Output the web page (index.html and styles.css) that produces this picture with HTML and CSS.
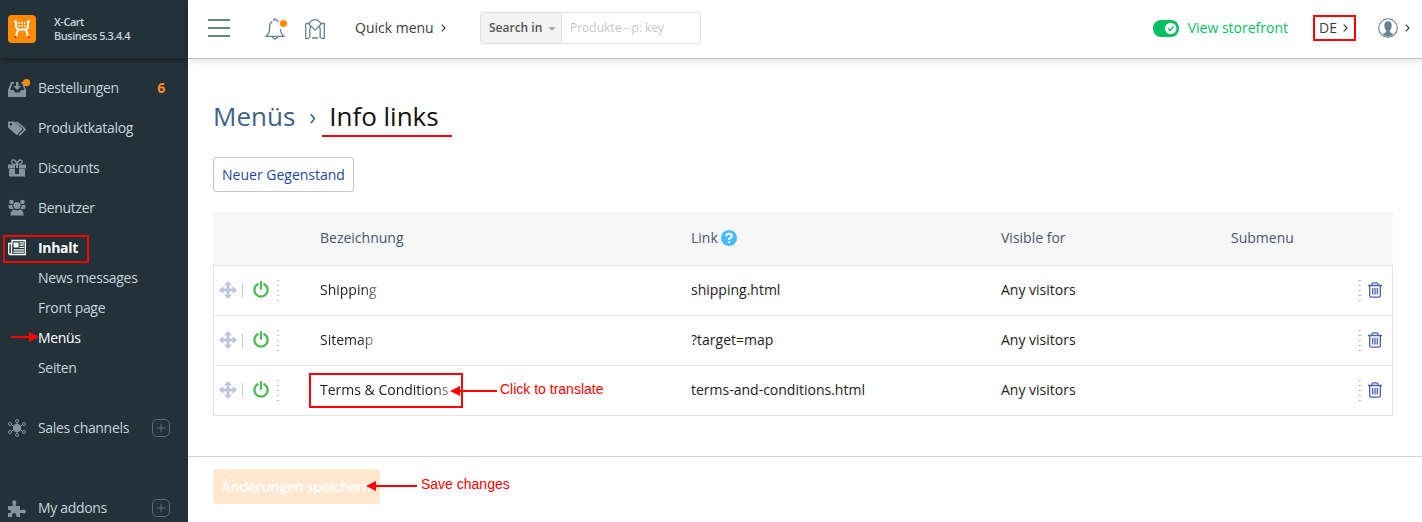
FILE: index.html
```html
<!DOCTYPE html>
<html lang="de">
<head>
<meta charset="utf-8">
<title>Info links</title>
<link rel="stylesheet" href="styles.css">
</head>
<body>
<svg class="defs" width="0" height="0">
  <symbol id="move" viewBox="0 0 18 18"><path d="M9 0l4 4.300h-2.600v3.300h3.300V5L18 9l-4.300 4v-2.600h-3.300v3.300H13L9 18l-4-4.300h2.600v-3.300H4.300V13L0 9l4.300-4v2.600h3.300V4.300H5z"/></symbol>
  <symbol id="power" viewBox="0 0 16 17"><path d="M4.600 3.300A6.600 6.600 0 1 0 11.400 3.300M8 1.200v6.600" fill="none" stroke="currentColor" stroke-width="2.300" stroke-linecap="round"/></symbol>
  <symbol id="trash" viewBox="0 0 14 16"><path d="M0 3.500h14M4 3.300V2q0-1.200 1.200-1.200h3.600Q10 .8 10 2v1.300M1.700 3.800v10q0 1.400 1.400 1.400h7.800q1.400 0 1.400-1.400v-10M4.700 6v6.500M7 6v6.500M9.300 6v6.500" fill="none" stroke="currentColor" stroke-width="1.300"/></symbol>
  <symbol id="chev" viewBox="0 0 5 8"><path d="M.7.7L4 4 .7 7.300" fill="none" stroke="currentColor" stroke-width="1.200"/></symbol>
  <symbol id="plus" viewBox="0 0 18 18"><rect x=".5" y=".5" width="17" height="17" rx="4.500" fill="none" stroke="currentColor"/><path d="M9 4.500v9M4.500 9h9" stroke="currentColor"/></symbol>
  <symbol id="dots" viewBox="0 0 2 22"><path d="M0 1.500h1.700M0 6.500h1.700M0 11.500h1.700M0 16.500h1.700M0 21.500h1.700" stroke="currentColor" stroke-width="1"/></symbol>
</svg>
<div class="app">
  <aside class="sidebar">
    <div class="brand">
      <svg class="logo" viewBox="0 0 28 28"><rect width="28" height="28" rx="4" fill="#ff8c00"/><path d="M6 6.500h2v4.500q0 3.500 3.500 3.500h5q3.500 0 3.500-3.500V6.500h2M11 15q-2.500 1-2.500 6M17 15q2.500 1 2.500 6M9.500 20.500H7.300M18.500 20.500h2.200" fill="none" stroke="#fff" stroke-width="1.900"/><path d="M10 7.800h8M10 10.800h8" stroke="#fff" stroke-width="1.700" stroke-dasharray="1.700 1.400"/><circle cx="7.500" cy="22" r="1.100" fill="#b9310a"/><circle cx="20.500" cy="22" r="1.100" fill="#b9310a"/></svg>
      <div class="brand-text">X-Cart<br><span>Business 5.3.4.4</span></div>
    </div>
    <nav class="menu">
      <a class="item"><svg class="icon" viewBox="0 0 22 18"><path d="M0 11L3 3h3v1.800H4.300L2.300 11h3l2 2.500h4l2-2.500h3l-2-6.200h-1V3h2L18 11v7H0zM8 3h2.400v4H13l-3.800 4L5.500 7H8z" fill="currentColor"/><circle cx="18.500" cy="3.700" r="3.600" fill="#ff8c00"/></svg><span>Bestellungen</span><b class="count">6</b></a>
      <a class="item"><svg class="icon" viewBox="0 0 22 18"><path fill-rule="evenodd" d="M0 2.500h6.500l8 7.500-5.600 6.300L0 8.500zM2.800 4a1.300 1.300 0 1 0 .1 0z" fill="currentColor"/><path d="M8.500 2.800l8.600 7.500-6 6" fill="none" stroke="currentColor" stroke-width="1.700"/></svg><span>Produktkatalog</span></a>
      <a class="item"><svg class="icon" viewBox="0 0 22 18"><path d="M0 5.500h7v4H0zM11 5.500h7v4h-7zM1 10h6v7.500H1zM11 10h6v7.500h-6zM7 15h4v2.500H7zM8 6h2v3H8z" fill="currentColor"/><path d="M8.500 5.500Q4 5.800 3.800 3T6 1q2 .5 2.700 4.300Q10 1.500 12 1q2.500 0 2.200 2t-5 2.500" fill="none" stroke="currentColor" stroke-width="1.300"/></svg><span>Discounts</span></a>
      <a class="item"><svg class="icon" viewBox="0 0 22 18"><g fill="currentColor"><circle cx="3.500" cy="3" r="2.300"/><circle cx="14.500" cy="3" r="2.300"/><circle cx="9" cy="6.500" r="3.600"/><path d="M.5 6h3.700q.4 3 2 4.300H3.500Q0 10.200.5 6zM17.500 6h-3.700q-.4 3-2 4.300h2.700Q18 10.200 17.500 6zM2.500 16.500q-.5-5.500 4-5.800 2.500 1 5 0 4.500.3 4 5.800z"/></g></svg><span>Benutzer</span></a>
      <a class="item active"><svg class="icon" viewBox="0 0 22 18"><path d="M4 1.500h13.300v14H2Q.7 15.500.7 14V4.500H4zM3.500 4v10q0 1.200-1.200 1.500" fill="none" stroke="currentColor" stroke-width="1.300"/><path d="M5.500 3.500h5v5h-5zM11.500 3.300H16v1.200h-4.500zM11.500 5.600H16v1.200h-4.500zM11.500 7.900H16v1h-4.500zM5.500 10.200H16v1.200H5.500zM5.500 12.600H16v1.200H5.500z" fill="currentColor"/></svg><span>Inhalt</span><i class="mark mark-inhalt"></i></a>
      <div class="submenu">
        <a>News messages</a>
        <a>Front page</a>
        <a class="current">Menüs<svg class="mark-arrow" viewBox="0 0 30 10"><path d="M1 5h20" stroke="red" stroke-width="2"/><path d="M19 0l10.500 5L19 10z" fill="red"/></svg></a>
        <a>Seiten</a>
      </div>
      <a class="item gap-first"><svg class="icon" viewBox="0 0 22 18"><circle cx="9" cy="9" r="4.200" fill="currentColor"/><g fill="none" stroke="currentColor" stroke-width="1"><circle cx="9" cy="2" r="1.500"/><circle cx="9" cy="16" r="1.500"/><circle cx="2" cy="5" r="1.500"/><circle cx="2" cy="13" r="1.500"/><circle cx="16" cy="5" r="1.500"/><circle cx="16" cy="13" r="1.500"/><path d="M9 3.500v11M3.300 5.800l11.400 6.400M3.300 12.200L14.700 5.800"/></g></svg><span>Sales channels</span><svg class="plus"><use href="#plus"/></svg></a>
      <a class="item gap-second"><svg class="icon" viewBox="0 0 22 18"><path d="M0 7h4.700L4.600 4.500a2 2 0 1 1 3.300 0L7.800 7H12v4h2.500a2 2 0 1 1 0 3H12v4H8.500q-.2-4-2.300-4T4 18H0v-4h1.500a1.300 1.300 0 1 0 0-3H0z" fill="currentColor"/></svg><span>My addons</span><svg class="plus"><use href="#plus"/></svg></a>
    </nav>
  </aside>
  <div class="main">
    <header class="topbar">
      <svg class="burger" viewBox="0 0 22 18"><path d="M0 1h22M0 9h22M0 17h22" stroke="#668391" stroke-width="2"/></svg>
      <svg class="bell" viewBox="0 0 24 22"><path d="M7.300 3.500Q4.500 5 4.500 9v3.500Q4.400 15.500 1.200 18.300H18.800Q15.500 15.500 15.400 11M8.500 2.800Q8.800 1 10 1t1.500 1.600l2 1M7.500 18.500q.5 2.300 2.500 2.300t2.500-2.300" fill="none" stroke="#668391" stroke-width="1.300"/><circle cx="18.500" cy="5.500" r="3.600" fill="#ff8c00"/></svg>
      <svg class="market" viewBox="0 0 20 20"><path d="M4 5.200Q6 .7 10 .7t6 4.500L10 11.200zM.7 4.500h3.500M15.800 4.500h3.500v15h-3.500M.7 4.500v15h3.500M4.200 5.200Q6.500 7 4.800 10v9M15.800 5.200q-2.300 1.800-.6 4.800v9M7 19h6" fill="none" stroke="#668391" stroke-width="1.300"/></svg>
      <a class="quick"><span>Quick menu</span><svg class="chev"><use href="#chev"/></svg></a>
      <div class="search"><div class="search-in"><span>Search in</span><i></i></div><div class="placeholder">Produkte - p: key</div></div>
      <div class="storefront"><svg viewBox="0 0 26 17"><rect width="26" height="17" rx="8" fill="#06c063"/><circle cx="17.700" cy="8.500" r="5.700" fill="#fff"/><path d="M15 8.500l2 2 3.500-4" fill="none" stroke="#06c063" stroke-width="1.300"/></svg><span>View storefront</span></div>
      <div class="lang"><span>DE</span><svg class="chev"><use href="#chev"/></svg></div>
      <div class="user"><svg class="avatar" viewBox="0 0 20 20"><circle cx="10" cy="10" r="9.300" fill="#fff" stroke="#668391" stroke-width="1.100"/><path d="M10 3.200q3.800 0 3.700 4.300-.1 3.500-2 5 .1 1.700 1.300 2.200l2.500 1.200Q13 18.800 10 18.800t-5.500-2.900l2.500-1.200q1.200-.5 1.300-2.200-1.900-1.500-2-5Q6.200 3.200 10 3.200z" fill="#668391"/></svg><svg class="chev"><use href="#chev"/></svg></div>
    </header>
    <main class="content">
      <h1 class="title"><a>Menüs</a><span class="sep">›</span><span class="here">Info links</span></h1>
      <button class="new">Neuer Gegenstand</button>
      <div class="table">
        <div class="row head"><div></div><div>Bezeichnung</div><div class="link-head">Link <svg class="help" viewBox="0 0 16 16"><circle cx="8" cy="8" r="8" fill="#46bdfa"/><path d="M5.300 6Q5.400 3.700 8 3.700T10.700 6Q10.700 7.300 9.300 8 8 8.700 8 9.700M8 11v2" fill="none" stroke="#fff" stroke-width="2"/></svg></div><div>Visible for</div><div>Submenu</div><div></div></div>
        <div class="row"><div class="tools"><svg class="move"><use href="#move"/></svg><i></i><svg class="power"><use href="#power"/></svg><svg class="dots"><use href="#dots"/></svg></div><div><span class="fade">Shipping</span></div><div>shipping.html</div><div>Any visitors</div><div></div><div class="remove"><svg class="dots"><use href="#dots"/></svg><svg class="trash"><use href="#trash"/></svg></div></div>
        <div class="row"><div class="tools"><svg class="move"><use href="#move"/></svg><i></i><svg class="power"><use href="#power"/></svg><svg class="dots"><use href="#dots"/></svg></div><div><span class="fade">Sitemap</span></div><div>?target=map</div><div>Any visitors</div><div></div><div class="remove"><svg class="dots"><use href="#dots"/></svg><svg class="trash"><use href="#trash"/></svg></div></div>
        <div class="row"><div class="tools"><svg class="move"><use href="#move"/></svg><i></i><svg class="power"><use href="#power"/></svg><svg class="dots"><use href="#dots"/></svg></div><div class="name"><span class="fade">Terms &amp; Conditions</span><i class="mark mark-terms"></i><div class="note note-translate"><svg viewBox="0 0 48 10"><path d="M8 5h39" stroke="red" stroke-width="2"/><path d="M10 0L0 5l10 5z" fill="red"/></svg><span>Click to translate</span></div></div><div>terms-and-conditions.html</div><div>Any visitors</div><div></div><div class="remove"><svg class="dots"><use href="#dots"/></svg><svg class="trash"><use href="#trash"/></svg></div></div>
      </div>
    </main>
    <footer class="actions"><div class="save">Änderungen speichern<div class="note note-save"><svg viewBox="0 0 51 10"><path d="M8 5h43" stroke="red" stroke-width="2"/><path d="M10 0L0 5l10 5z" fill="red"/></svg><span>Save changes</span></div></div></footer>
  </div>
</div>
</body>
</html>
```
FILE: styles.css
```css
* { box-sizing: border-box; }
body { margin: 0; font: 14px/20px "Open Sans", sans-serif; color: #222; background: #fff; overflow: hidden; }
svg { display: block; flex: none; }
.defs { position: absolute; }
.app { display: flex; height: 522px; overflow: hidden; }

.sidebar { width: 188px; flex: none; background: #233239; color: #c2d4dd; overflow: hidden; }
.brand { height: 58px; display: flex; align-items: center; padding: 0 8px; gap: 18px; box-shadow: 0 2px 6px rgba(0,0,0,.4); }
.logo { width: 28px; height: 28px; }
.brand-text { font-size: 11px; line-height: 14px; font-weight: 600; letter-spacing: -.48px; padding-bottom: 1px; }
.menu { padding-top: 10px; letter-spacing: -.32px; }
.item { position: relative; display: flex; align-items: center; height: 40px; padding: 0 18px 0 8px; gap: 8px; }
.item span { flex: 1; }
.icon { width: 22px; height: 18px; color: #84939c; }
.active { color: #fff; font-weight: 700; }
.active .icon { color: #fff; }
.count { color: #ff8c1a; margin-right: 5px; }
.plus { width: 18px; height: 18px; color: #5d6c74; }
.submenu { margin-top: -5px; padding-left: 38px; }
.submenu a { display: block; position: relative; line-height: 30px; }
.submenu .current { color: #fff; }
.gap-first { margin-top: 25px; }
.gap-second { margin-top: 40px; }

.main { flex: 1; display: flex; flex-direction: column; }
.topbar { height: 59px; flex: none; display: flex; align-items: center; padding: 0 12px 3px 20px; border-bottom: 1px solid #bcbcbc; box-shadow: 0 1px 8px rgba(0,0,0,.16); color: #3d3d3d; }
.burger { width: 22px; height: 18px; margin-top: 1px; }
.bell { width: 24px; height: 22px; margin-left: 35px; margin-top: 2px; }
.market { width: 20px; height: 20px; margin-left: 16px; margin-top: 2px; }
.quick { display: flex; align-items: center; gap: 7px; margin-left: 30px; width: 125px; }
.chev { width: 5px; height: 8px; margin-top: 1px; }
.search { display: flex; width: 221px; height: 32px; border: 1px solid #e2e2e2; border-radius: 3px; font-size: 12px; line-height: 30px; }
.search-in { display: flex; align-items: center; width: 81px; padding-left: 8px; gap: 6px; background: #f3f3f3; border-right: 1px solid #e2e2e2; font-weight: 600; color: #555; }
.search-in i { border: 4px solid transparent; border-top-color: #aaa; border-bottom: 0; margin-top: 3px; }
.placeholder { padding-left: 8px; color: #c7c7c7; }
.storefront { display: flex; align-items: center; gap: 9px; margin-left: auto; color: #06c063; padding-top: 1px; }
.storefront svg { width: 26px; height: 17px; }
.lang { display: flex; align-items: center; gap: 6px; width: 43px; height: 26px; margin-left: 25px; padding-left: 4px; border: 2px solid red; }
.user { display: flex; align-items: center; gap: 7px; margin-left: 22px; }
.avatar { width: 20px; height: 20px; margin-top: 1px; }

.content { flex: 1; padding: 38px 29px 0 25px; }
.title { display: flex; margin: 0; font-size: 26px; line-height: 38px; font-weight: 400; color: #111; }
.title a { color: #416285; }
.sep { margin-left: 14px; color: #416285; font-size: 23px; line-height: 38px; }
.here { margin-left: 6px; padding: 0 13px 0 7px; height: 40px; border-bottom: 2px solid red; }
.new { display: block; margin: 20px 0; width: 141px; height: 35px; padding: 0; border: 1px solid #c4c4c4; border-radius: 3px; background: #fff; color: #264a96; font: inherit; white-space: nowrap; }
.table { border: 1px solid #e5e5e5; border-top: 0; }
.row { display: grid; grid-template-columns: 106px 371px 310px 230px 1fr 33px; align-items: center; height: 50px; padding-bottom: 2px; border-top: 1px solid #e5e5e5; }
.row.head { height: 53px; margin: 0 -1px; padding-left: 1px; border: 0; background: #f7f7f7; color: #48566f; }
.link-head { display: flex; align-items: center; gap: 3px; }
.help { width: 16px; height: 16px; }
.tools { display: flex; align-items: center; padding-left: 5px; }
.tools i { width: 1px; height: 15px; margin: 2px 0 0 5px; background: #ccc; }
.move { width: 18px; height: 18px; fill: #bec6db; }
.power { width: 16px; height: 17px; margin-left: 10px; color: #4dba55; }
.dots { width: 2px; height: 22px; color: #9eabb3; }
.tools .dots { margin-left: 8px; }
.remove { display: flex; align-items: center; gap: 7px; }
.trash { width: 14px; height: 16px; color: #4a62ae; }
.fade { -webkit-mask-image: linear-gradient(to right, #000 calc(100% - 14px), rgba(0,0,0,.5)); mask-image: linear-gradient(to right, #000 calc(100% - 14px), rgba(0,0,0,.5)); }
.name { position: relative; }

.actions { height: 66px; flex: none; border-top: 1px solid #d4d4d4; padding: 12px 25px; }
.save { position: relative; width: 167px; height: 35px; border-radius: 3px; background: #ffe8cf; color: #fff; font-weight: 600; line-height: 35px; text-align: center; letter-spacing: -.2px; }

.mark { position: absolute; border: 2px solid red; }
.mark-inhalt { left: 3px; top: 7px; width: 86px; height: 28px; }
.mark-terms { left: -11px; top: -7px; width: 154px; height: 35px; }
.mark-arrow { position: absolute; left: -28px; top: 9px; width: 30px; height: 10px; }
.note { position: absolute; display: flex; align-items: center; gap: 2px; color: red; font: 14px/16px "Liberation Sans", sans-serif; letter-spacing: 0; white-space: nowrap; }
.note svg { height: 10px; margin-top: 4px; }
.note-translate { left: 130px; top: 1px; }
.note-translate svg { width: 48px; }
.note-save { left: 153px; top: 7px; gap: 4px; }
.note-save svg { width: 51px; }
```
